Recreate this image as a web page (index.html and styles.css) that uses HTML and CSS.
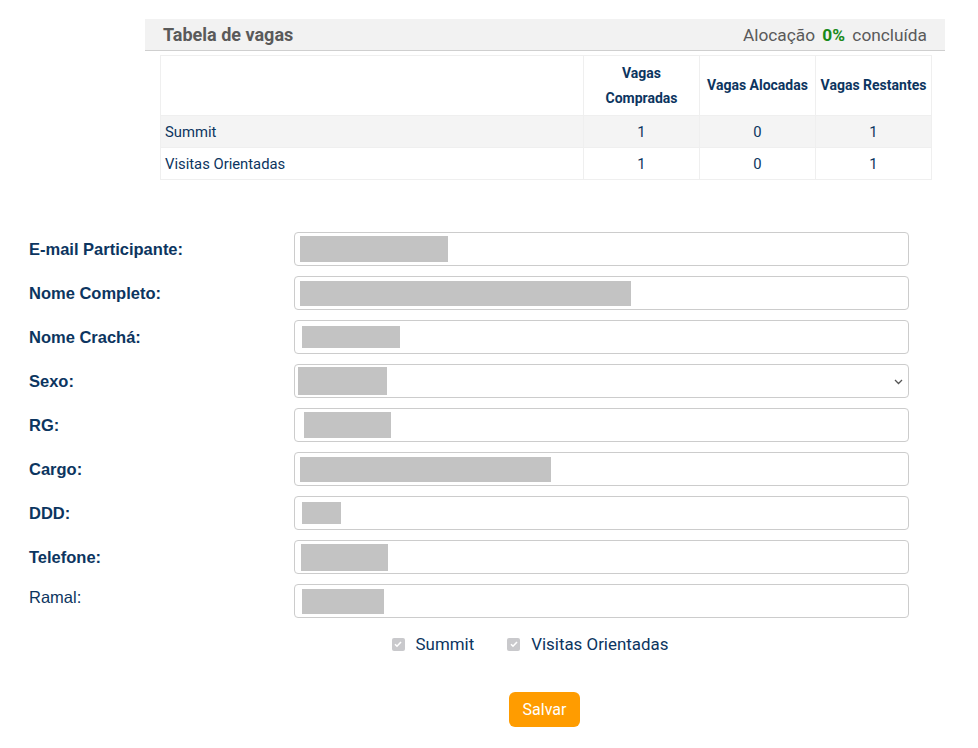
FILE: index.html
```html
<!DOCTYPE html>
<html lang="pt-BR">
<head>
<meta charset="utf-8">
<title>Tabela de vagas</title>
<link rel="stylesheet" href="styles.css">
</head>
<body>
<div class="page">
  <section class="vagas">
    <div class="vagas-bar">
      <span class="vagas-title">Tabela de vagas</span>
      <span class="vagas-status">Alocação <b class="pct">0%</b> concluída</span>
    </div>
    <table class="vagas-table">
      <colgroup>
        <col class="c-name"><col class="c-num"><col class="c-num"><col class="c-num">
      </colgroup>
      <thead>
        <tr><th></th><th>Vagas<br>Compradas</th><th>Vagas Alocadas</th><th>Vagas Restantes</th></tr>
      </thead>
      <tbody>
        <tr class="odd"><td>Summit</td><td class="n">1</td><td class="n">0</td><td class="n">1</td></tr>
        <tr><td>Visitas Orientadas</td><td class="n">1</td><td class="n">0</td><td class="n">1</td></tr>
      </tbody>
    </table>
  </section>

  <form class="form">
    <div class="row"><label class="lbl">E-mail Participante:</label><div class="field"><span class="mask" style="margin-left:5px;width:148px;height:26px"></span></div></div>
    <div class="row"><label class="lbl">Nome Completo:</label><div class="field"><span class="mask" style="margin-left:5px;width:331px;height:25px"></span></div></div>
    <div class="row"><label class="lbl">Nome Crachá:</label><div class="field"><span class="mask" style="margin-left:7px;width:98px;height:22px"></span></div></div>
    <div class="row"><label class="lbl">Sexo:</label><div class="field select"><span class="mask" style="margin-left:3px;width:89px;height:28px"></span><svg class="chev" width="9" height="6" viewBox="0 0 9 6"><path d="M1 1l3.5 3.5L8 1" fill="none" stroke="#555" stroke-width="1.3"/></svg></div></div>
    <div class="row"><label class="lbl">RG:</label><div class="field"><span class="mask" style="margin-left:9px;width:87px;height:26px"></span></div></div>
    <div class="row"><label class="lbl">Cargo:</label><div class="field"><span class="mask" style="margin-left:5px;width:251px;height:25px"></span></div></div>
    <div class="row"><label class="lbl">DDD:</label><div class="field"><span class="mask" style="margin-left:7px;width:39px;height:22px"></span></div></div>
    <div class="row"><label class="lbl">Telefone:</label><div class="field"><span class="mask" style="margin-left:6px;width:87px;height:27px"></span></div></div>
    <div class="row"><label class="lbl lbl-plain">Ramal:</label><div class="field"><span class="mask" style="margin-left:7px;width:82px;height:25px"></span></div></div>

    <div class="checks">
      <label class="check"><span class="box"><svg width="12" height="12" viewBox="0 0 12 12"><path d="M3 6.2l2 2L9 4" fill="none" stroke="#fff" stroke-width="1.6"/></svg></span>Summit</label>
      <label class="check"><span class="box"><svg width="12" height="12" viewBox="0 0 12 12"><path d="M3 6.2l2 2L9 4" fill="none" stroke="#fff" stroke-width="1.6"/></svg></span>Visitas Orientadas</label>
    </div>
    <div class="actions"><button type="button" class="btn">Salvar</button></div>
  </form>
</div>
</body>
</html>
```
FILE: styles.css
```css
* { box-sizing: border-box; }
body {
  margin: 0;
  background: #fff;
  font-family: "Liberation Sans", Arial, sans-serif;
}
.page {
  width: 978px;
  padding-top: 19px;
}
.vagas {
  margin-left: 145px;
  width: 800px;
}
.vagas-bar {
  height: 32px;
  background: #f2f2f2;
  border-bottom: 1px solid #cfcfcf;
  display: flex;
  align-items: center;
  justify-content: space-between;
  padding: 0 18px 0 18px;
  font-family: Roboto, sans-serif;
  color: #5a5a5a;
}
.vagas-title {
  font-weight: bold;
  font-size: 18px;
}
.vagas-status {
  font-size: 17.3px;
  word-spacing: 3px;
}
.pct {
  color: #1a8a1a;
}
.vagas-table {
  margin: 4px 0 0 15px;
  width: 770px;
  border-collapse: collapse;
  table-layout: fixed;
  font-family: Roboto, sans-serif;
  color: #0c3560;
  font-size: 14.8px;
}
.c-name { width: 423px; }
.c-num { width: 116px; }
.vagas-table th, .vagas-table td {
  border: 1px solid #efefef;
}
.vagas-table th {
  height: 60px;
  font-weight: bold;
  font-size: 14px;
  line-height: 25px;
  text-align: center;
  padding: 0 1px;
  white-space: nowrap;
}
.vagas-table td {
  height: 32px;
  padding: 0 4px;
}
.vagas-table td.n { text-align: center; }
.vagas-table tr.odd td { background: #f4f4f4; }

.form {
  margin-top: 52px;
}
.row {
  display: flex;
  align-items: flex-start;
  margin-bottom: 10px;
}
.lbl {
  width: 294px;
  padding-left: 29px;
  line-height: 34px;
  font-size: 16.5px;
  font-weight: bold;
  color: #0c3560;
}
.lbl-plain {
  font-weight: normal;
  line-height: 26px;
}
.field {
  width: 615px;
  height: 34px;
  border: 1px solid #cccccc;
  border-radius: 4px;
  display: flex;
  align-items: center;
  position: relative;
  background: #fff;
}
.mask {
  display: block;
  background: #c3c3c3;
}
.chev {
  position: absolute;
  right: 5px;
  top: 14px;
}
.checks {
  display: flex;
  justify-content: center;
  gap: 33px;
  margin-top: 16px;
  padding-left: 82px;
}
.check {
  display: flex;
  align-items: center;
  font-family: Roboto, sans-serif;
  font-size: 16.9px;
  color: #0c3560;
}
.box {
  width: 13px;
  height: 13px;
  background: #c9c9cc;
  border-radius: 2px;
  margin-right: 11px;
  display: flex;
  align-items: center;
  justify-content: center;
}
.actions {
  display: flex;
  justify-content: center;
  padding-left: 111px;
  margin-top: 38px;
}
.btn {
  background: #ff9c00;
  color: #fff;
  border: none;
  border-radius: 6px;
  height: 35px;
  width: 71px;
  font-family: Roboto, sans-serif;
  font-size: 16px;
  padding: 0;
}
```
